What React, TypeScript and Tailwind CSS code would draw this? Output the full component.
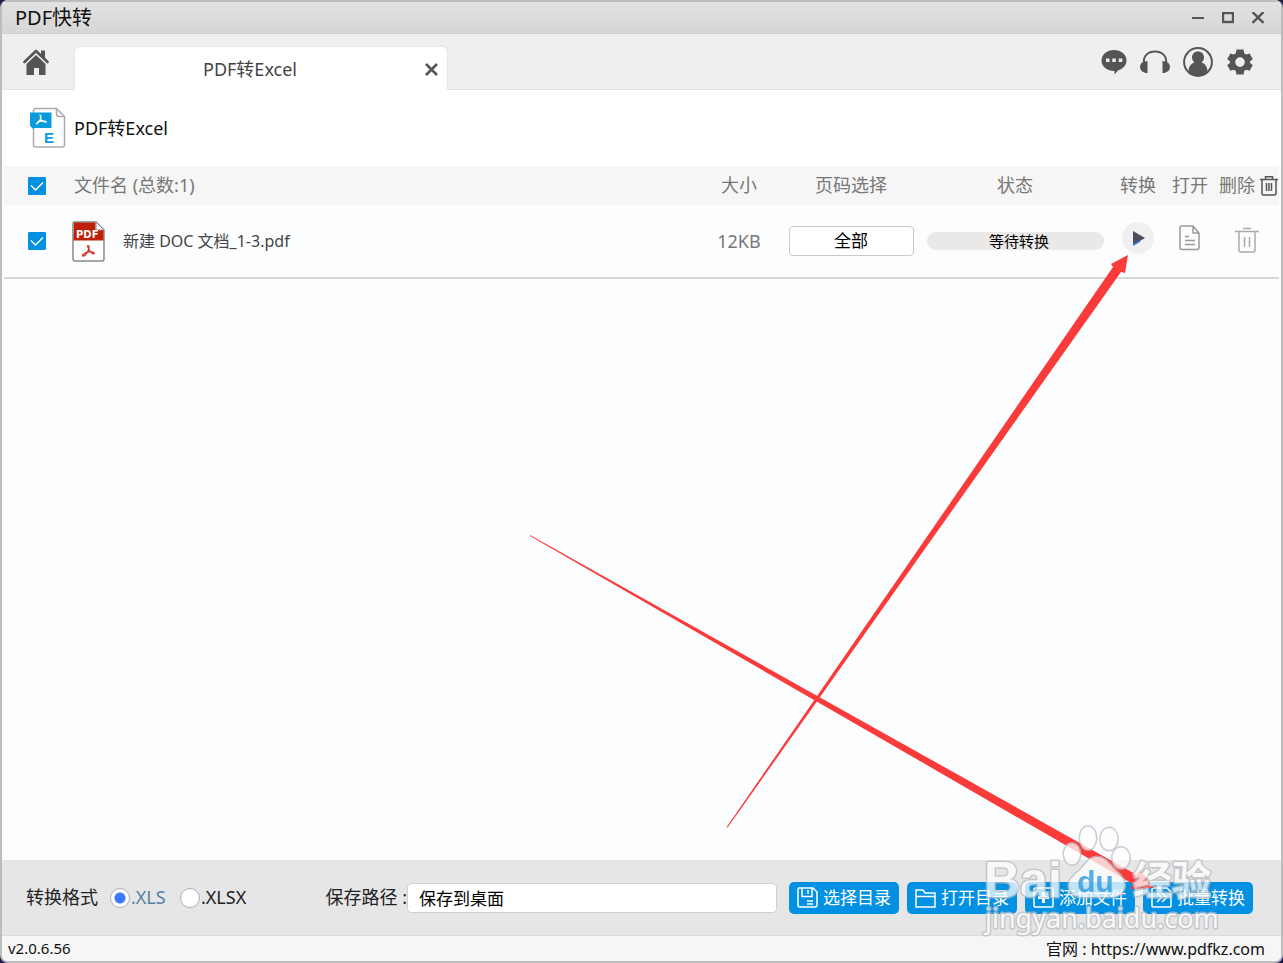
import React from 'react';

const iconButton = 'flex items-center justify-center text-[#555555]';
const actionButton =
  'flex h-8 w-[110px] items-center justify-center gap-1 rounded-[5px] bg-[#0290e2] text-white whitespace-nowrap';

function Check({ label }: { label: string }) {
  return (
    <label className="relative flex h-[18px] w-[18px]">
      <input
        type="checkbox"
        defaultChecked
        aria-label={label}
        className="peer h-[18px] w-[18px] appearance-none rounded-[1px] border border-[#0290e2] checked:bg-[#0290e2]"
      />
      <svg viewBox="0 0 18 18" className="pointer-events-none absolute inset-0 hidden peer-checked:block" fill="none" stroke="#fff" strokeWidth="1.5">
        <path d="M3 8.500 7.500 13 15 5.500" />
      </svg>
    </label>
  );
}

function TitleBar() {
  return (
    <header className="flex h-[34px] items-center justify-between border-t-2 border-b border-t-[#bdbdbd] border-b-[#d0d0d0] bg-linear-to-b from-[#e2e2e2] to-[#d6d6d6] pr-[17px] pl-[13px]">
      <h1 className="text-[20px] leading-8">PDF快转</h1>
      <div className="flex items-center gap-[18px]">
        <button aria-label="最小化" className={iconButton}>
          <svg width="12" height="12" viewBox="0 0 12 12"><path d="M0 6h12" stroke="currentColor" strokeWidth="2" /></svg>
        </button>
        <button aria-label="最大化" className={iconButton}>
          <svg width="12" height="12" viewBox="0 0 12 12"><rect x="1" y="1" width="10" height="9" fill="none" stroke="currentColor" strokeWidth="2.4" /></svg>
        </button>
        <button aria-label="关闭" className={iconButton}>
          <svg width="12" height="12" viewBox="0 0 12 12"><path d="m.5 0 11 11m0-11-11 11" stroke="currentColor" strokeWidth="2.4" /></svg>
        </button>
      </div>
    </header>
  );
}

function TabBar() {
  return (
    <nav className="flex h-14 items-end justify-between border-b border-[#e4e4e4] bg-[#efefef] pr-[28px]">
      <div className="flex items-end">
        <button aria-label="首页" className={`${iconButton} h-14 w-[72px] pt-[2px] pr-1`}>
          <svg width="26" height="26" viewBox="0 0 26 26">
            <path d="M1.500 13 13 2l11.500 11" fill="none" stroke="currentColor" strokeWidth="2.600" strokeLinecap="round" strokeLinejoin="round" />
            <path d="M18 1.500h4v8.500l-4-4zM13 6l9.500 9v11h-6.500v-7h-5v7H3.500V15z" fill="currentColor" />
          </svg>
        </button>
        <div className="-mb-px flex h-11 w-[374px] items-center rounded-t-md border border-b-0 border-[#e6e6e6] bg-white pt-[2px]">
          <span className="flex-1 text-center text-[18px] text-[#444]">PDF转Excel</span>
          <button aria-label="关闭标签" className={`${iconButton} w-[22px] pr-[9px]`}>
            <svg className="shrink-0" width="13" height="13" viewBox="0 0 13 13"><path d="m1 1 11 11m0-11L1 12" stroke="currentColor" strokeWidth="2.600" /></svg>
          </button>
        </div>
      </div>
      <div className="flex h-14 items-center gap-3 pt-[2px]">
        <button aria-label="消息" className={iconButton}>
          <svg width="26" height="26" viewBox="0 0 26 26" fill="currentColor">
            <path fillRule="evenodd" d="M13 1c7 0 12.500 4.500 12.500 10.500 0 4.600-3.500 8.500-8.500 9.900L13.500 25.500V22C6.200 22 .5 17.500.5 11.500S6 1 13 1zM5 9.500V13h3.500V9.500zm6.300 0V13h3.500V9.500zm6.500 0V13h3.500V9.500z" />
          </svg>
        </button>
        <button aria-label="客服" className={iconButton}>
          <svg width="32" height="26" viewBox="0 0 32 26">
            <path d="M5 14C4 7 9 2.500 16 2.500S28 7 27 14" fill="none" stroke="currentColor" strokeWidth="2" />
            <path d="M8.500 12v12H6.500C3 23 1 21 1 18s2-5 4.500-5.500zM23.500 12v12h2C29 23 31 21 31 18s-2-5-4.500-5.500z" fill="currentColor" />
          </svg>
        </button>
        <button aria-label="账户" className={iconButton}>
          <svg width="30" height="30" viewBox="0 0 30 30">
            <circle cx="15" cy="15" r="13.900" fill="none" stroke="currentColor" strokeWidth="2" />
            <path d="M15 4.500c3.700 0 6 2.600 6 6 0 2.200-1 3.800-2.500 5 3.500 1 5.700 4 6 8.500C22 27 19 29 15 29s-7-2-9.500-5c.3-4.500 2.500-7.500 6-8.500C10 14.300 9 12.700 9 10.500c0-3.400 2.300-6 6-6z" fill="currentColor" />
          </svg>
        </button>
        <button aria-label="设置" className={`${iconButton} ml-[2px]`}>
          <svg width="26" height="26" viewBox="0 0 26 26" fill="currentColor">
            <path fillRule="evenodd" d="M9.500.5h7l.8 3.900 2 1.200 3.200-1.200 3.300 5.600-2.800 2.400v1.400l2.800 2.500-3.300 5.500-3.300-1.100-1.900 1.100-.8 3.700h-7l-.8-3.700-1.900-1.100-3.300 1.100L.2 16.300 3 13.800v-1.400L.2 10l3.300-5.600 3.200 1.200 2-1.200zM13 8.300a4.800 4.800 0 1 0 0 9.600 4.800 4.800 0 0 0 0-9.600z" />
          </svg>
        </button>
      </div>
    </nav>
  );
}

function ExcelIcon() {
  return (
    <svg width="36" height="42" viewBox="0 0 36 42">
      <path d="M5 1.500h21.500l8 8V38a2 2 0 0 1-2 2H5.500a2 2 0 0 1-2-2V3z" fill="#fff" stroke="#aaa" strokeWidth="1.500" />
      <path d="M26.500 1.500V7c0 1.500 1 2.500 2.500 2.500h5.500" fill="none" stroke="#aaa" strokeWidth="1.500" />
      <path d="M0 5.500h21.500V21H4v1.500L0 19z" fill="#0a9bdc" />
      <path d="M9.500 8c2 0 1 3 1 4.500-1 2-2.500 3.500-4.500 4.500m4.500-4.500c2 2 4 2.800 6.500 2.500M7.500 15c2.500-1.500 5-1.500 8-.5" fill="none" stroke="#fff" strokeWidth="1.600" />
      <text x="14" y="36" fontSize="15" fontWeight="700" fill="#0a9bdc" fontFamily="Liberation Sans">E</text>
    </svg>
  );
}

function PdfIcon() {
  return (
    <svg width="33" height="41" viewBox="0 0 33 41">
      <path d="M2 1h22l8 8v29a2 2 0 0 1-2 2H3a2 2 0 0 1-2-2V2z" fill="#fff" stroke="#888" strokeWidth="1.500" />
      <path d="M2 1.500h21.500V9h8v10.500h-30z" fill="#c11e07" />
      <path d="M24 1v8h8z" fill="#fff" stroke="#888" />
      <text x="4" y="17" fontSize="10" fontWeight="700" fill="#fff" fontFamily="DejaVu Sans">PDF</text>
      <path d="M15.500 25c1.500-1 2 1.500.5 5-1.500 3-3.500 5.500-5 5-1.500-1 2-3.500 5.500-4s6 .5 5.500 1.500-4-.5-6.500-7.500z" fill="none" stroke="#d33a2c" strokeWidth="1.500" />
    </svg>
  );
}

function FileTable() {
  return (
    <table className="w-full table-fixed border-collapse">
      <colgroup>
        <col className="w-[68px]" />
        <col />
        <col className="w-[78px]" />
        <col className="w-[146px]" />
        <col className="w-[182px]" />
        <col className="w-[64px]" />
        <col className="w-[40px]" />
        <col className="w-[69px]" />
      </colgroup>
      <thead>
        <tr className="h-[39px] bg-[#f6f6f6] text-[18px] whitespace-nowrap text-[#777]">
          <th className="pl-6"><Check label="全选" /></th>
          <th className="pl-[2px] text-left font-normal">文件名 (总数:1)</th>
          <th className="font-normal">大小</th>
          <th className="font-normal">页码选择</th>
          <th className="font-normal">状态</th>
          <th className="font-normal">转换</th>
          <th className="font-normal">打开</th>
          <th className="font-normal">
            <div className="flex items-center justify-end gap-1">
              删除
              <button aria-label="全部删除">
                <svg width="20" height="21" viewBox="0 0 20 21" fill="none" stroke="#555" strokeWidth="1.500">
                  <path d="M1 4.500h18M6.500 4V1.800h7V4M3 4.500V18a2 2 0 0 0 2 2h10a2 2 0 0 0 2-2V4.500M7.500 8v8M10 8v8m2.500-8v8" />
                </svg>
              </button>
            </div>
          </th>
        </tr>
      </thead>
      <tbody>
        <tr className="h-[73px] border-b-2 border-[#d6d8d8]">
          <td className="pl-6"><Check label="新建 DOC 文档_1-3.pdf" /></td>
          <td>
            <div className="flex items-center gap-[18px] text-[16px] text-[#444]">
              <PdfIcon />
              <span>新建 DOC 文档_1-3.pdf</span>
            </div>
          </td>
          <td className="text-center text-[18px] text-[#777]">12KB</td>
          <td className="text-center">
            <button className="h-[30px] w-[125px] rounded border border-[#c8caca] bg-white text-[17px] leading-7 text-black">全部</button>
          </td>
          <td>
            <div className="mx-auto flex h-[18px] w-[177px] items-center justify-center rounded-full bg-[#ebe9e8] pl-2 text-[15px] text-black">等待转换</div>
          </td>
          <td>
            <button aria-label="转换" className="mx-auto mb-1.5 flex h-8 w-8 items-center justify-center rounded-full bg-[#f0f0f0]">
              <svg className="ml-[2px]" width="14" height="16" viewBox="0 0 14 16"><path d="M1 1v14l12-7z" fill="#4b4f5c" /><path d="M1 15 8 11" stroke="#3f6fe0" strokeWidth="1.500" /></svg>
            </button>
          </td>
          <td>
            <button aria-label="打开" className="mx-auto mb-1.5 flex">
              <svg width="22" height="26" viewBox="0 0 22 26" fill="none" stroke="#999" strokeWidth="1.500">
                <path d="M3 1h11l6 7v14.500a2 2 0 0 1-2 2H3a2 2 0 0 1-2-2V3a2 2 0 0 1 2-2zM14 1v7h6M6 11.500h4M6 15.500h10M6 19.500h10" />
              </svg>
            </button>
          </td>
          <td>
            <button aria-label="删除" className="mx-auto mb-0.5 flex pl-1">
              <svg width="24" height="26" viewBox="0 0 24 26" fill="none" stroke="#aaa" strokeWidth="1.500">
                <path d="M0 4.500h24M8 1.500h8M4 4.500V23a2 2 0 0 0 2 2h12a2 2 0 0 0 2-2V4.500M9.500 10v10m5-10v10" />
              </svg>
            </button>
          </td>
        </tr>
      </tbody>
    </table>
  );
}

function BottomBar() {
  return (
    <section className="flex h-[75px] items-center bg-[#e6e6e6] pr-[28px] pl-6 text-[17px] text-[#222]">
      <fieldset className="flex items-center">
        <legend className="float-left w-[84px] text-[18px] whitespace-nowrap">转换格式</legend>
        <label className="flex w-[70px] items-center gap-px text-[18px] text-[#5a7f9f]">
          <input type="radio" name="format" defaultChecked className="h-5 w-5 appearance-none rounded-full border border-[#b0b0b0] bg-white checked:bg-[radial-gradient(#3b7bff_5px,white_6px)]" />
          .XLS
        </label>
        <label className="flex items-center gap-px text-[18px]">
          <input type="radio" name="format" className="h-5 w-5 appearance-none rounded-full border border-[#b0b0b0] bg-white checked:bg-[radial-gradient(#3b7bff_5px,white_6px)]" />
          .XLSX
        </label>
      </fieldset>
      <label htmlFor="save-path" className="ml-auto shrink-0 text-[18px] whitespace-nowrap">保存路径 :</label>
      <input
        id="save-path"
        defaultValue="保存到桌面"
        className="h-[30px] w-[370px] rounded border border-[#cfcfcf] bg-white px-[11px] text-black"
      />
      <div className="ml-3 flex gap-2">
        <button className={actionButton}>
          <svg width="22" height="22" viewBox="0 0 22 22" fill="none" stroke="#fff" strokeWidth="1.500">
            <path d="M2 1h14l4 4v13a2 2 0 0 1-2 2H3a2 2 0 0 1-2-2V2zM5 1v8.500h10V1M11 3v4M10 14h6M10 17h6" />
          </svg>
          选择目录
        </button>
        <button className={actionButton}>
          <svg width="22" height="22" viewBox="0 0 22 22" fill="none" stroke="#fff" strokeWidth="1.500"><path d="M1 20V3h7l2 3h10v14zM1 9.500h19" /></svg>
          打开目录
        </button>
        <button className={actionButton}>
          <svg width="22" height="22" viewBox="0 0 22 22" fill="none" stroke="#fff" strokeWidth="1.500"><rect x="1" y="1" width="19" height="19" rx="1" /><path d="M10.500 5v11M5 10.500h11" strokeWidth="3" /></svg>
          添加文件
        </button>
        <button className={actionButton}>
          <svg width="22" height="22" viewBox="0 0 22 22" fill="none" stroke="#fff" strokeWidth="1.500"><path d="M2 1h14l4 4v14a1 1 0 0 1-1 1H2a1 1 0 0 1-1-1V2a1 1 0 0 1 1-1zM6 6l4.500 4.500L6 15m5-9 4.500 4.500L11 15" /></svg>
          批量转换
        </button>
      </div>
    </section>
  );
}

function Annotations() {
  return (
    <svg viewBox="0 0 1283 963" className="pointer-events-none absolute inset-0 h-full w-full">
      <g fill="#fb3a3a">
        <path d="M726 828 1113 267 1111 264 1128 255 1125 273 1121 272 728 827z" />
        <path d="M530 535 1137 875 1140 870 1154 888 1130 889 1133 884 530 536z" />
      </g>
      <g opacity=".75" fill="#fff" stroke="#b9bdc2" strokeWidth="3" strokeLinejoin="round" style={{ paintOrder: 'stroke' }}>
        <ellipse cx="1072" cy="854" rx="8" ry="10.500" />
        <ellipse cx="1088" cy="838" rx="8" ry="11.500" />
        <ellipse cx="1109" cy="839" rx="8.500" ry="11" />
        <ellipse cx="1121" cy="858" rx="8.500" ry="10.500" />
        <path d="M1097 857c9 0 13 9 20 15 8 7 9 14 6 19s-9 6-14 6h-25c-8 0-14-3-15-10-1-8 6-12 12-18 5-5 8-12 16-12z" />
        <text x="984" y="897" fontSize="50" fontWeight="700" fontFamily="Liberation Sans">Bai</text>
        <text x="1133" y="894" fontSize="39" fontWeight="700" fontFamily="Noto Sans CJK SC">经验</text>
        <text x="985" y="928" fontSize="27" fontFamily="Noto Sans">jingyan.baidu.com</text>
      </g>
      <text x="1077" y="892" fontSize="30" fontWeight="700" fontFamily="Liberation Sans" fill="#2c9ade" fillOpacity=".8">du</text>
    </svg>
  );
}

export default function App() {
  return (
    <div className="relative bg-[#20204a] font-['Noto_Sans','Noto_Sans_CJK_SC',sans-serif]">
      <main className="flex min-h-screen flex-col overflow-hidden rounded-lg border-x-2 border-b-2 border-[#bdbdbd] bg-[#fbfdff] text-[#111]">
        <TitleBar />
        <TabBar />
        <div className="flex h-[76px] items-center gap-2 bg-white pl-7 text-[18px]">
          <ExcelIcon />
          <h2>PDF转Excel</h2>
        </div>
        <div className="flex-1 px-[2px]">
          <FileTable />
        </div>
        <BottomBar />
        <footer className="flex h-[26px] items-center justify-between border-t border-[#dcdcdc] bg-[#f6f6f6] pr-4 pl-[6px]">
          <span className="text-[15px]">v2.0.6.56</span>
          <span className="text-[16px]">官网 : <a href="https://www.pdfkz.com">https://www.pdfkz.com</a></span>
        </footer>
      </main>
      <Annotations />
    </div>
  );
}
